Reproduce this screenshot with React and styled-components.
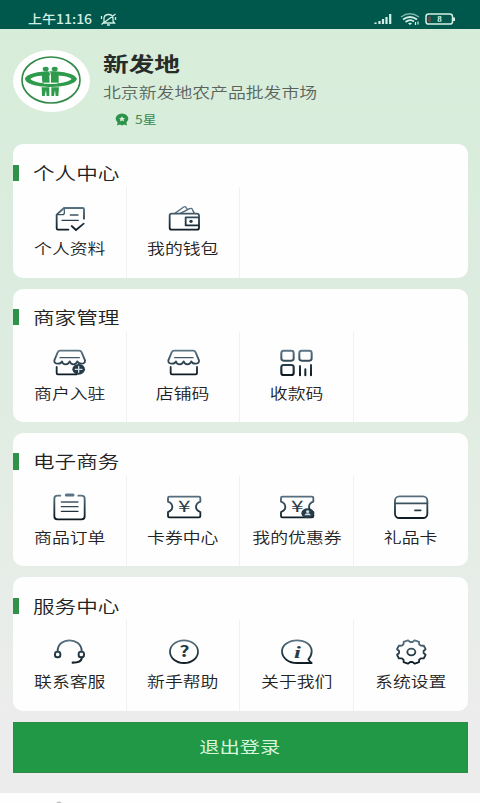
import styled, { createGlobalStyle } from "styled-components";

const GlobalStyle = createGlobalStyle`
    * {
        box-sizing: border-box;
    }

    body {
        margin: 0;
        background-color: #fefefe;
        font-family: "Noto Sans CJK SC", sans-serif;
        overflow: hidden;
    }
`;

const INK = "url(#ink)";
const DARK = "#253b47";

const Glyph = styled.text`
    fill: #273b47;
    stroke: none;
    font-family: ${({ $serif }) => ($serif ? '"Liberation Serif", serif' : '"Noto Sans CJK SC", sans-serif')};
    font-style: ${({ $serif }) => ($serif ? "italic" : "normal")};
    font-weight: ${({ $bold }) => ($bold ? "bold" : "400")};
    text-anchor: middle;
`;

// 톱니바퀴 외곽선
const gearPath = (cx, cy, rx, ry) => {
    const steps = [[-17, 0.84], [-9, 1], [9, 1], [17, 0.84]];
    const points = [];
    for (let i = 0; i < 8; i++) {
        steps.forEach(([offset, radius]) => {
            const angle = ((22.5 + i * 45 + offset) * Math.PI) / 180;
            points.push(`${(cx + rx * radius * Math.cos(angle)).toFixed(1)} ${(cy + ry * radius * Math.sin(angle)).toFixed(1)}`);
        });
    }
    return `M${points.join("L")}Z`;
};

const TICKET = "M16 17H105Q109 17 109 21V32Q96 37 96 48Q96 58 109 63V75Q109 79 105 79H16Q12 79 12 75V63Q25 58 25 48Q25 37 12 32V21Q12 17 16 17Z";
const AWNING = "M13 40L23 16Q25 11 31 11H87Q93 11 95 16L105 40Q106 50 94 50Q85 50 82 43Q79 52 70 52Q62 52 59 43Q56 52 47 52Q38 52 36 43Q33 50 24 50Q12 50 13 40Z";

const Yen = () => (
    <Glyph x="0" y="0" fontSize="45" transform="translate(61 64) scale(1.5 1)">¥</Glyph>
);

const icons = {
    profile: (
        <>
            <path d="M42 15H98Q102 15 102 19V47M42 15L20 35V76Q20 80 24 80H55" />
            <path d="M20 35H37Q43 35 43 30V15M36 52H85M61 36H84" strokeWidth="4" />
            <path d="M65 69L78 81L101 62" />
        </>
    ),
    wallet: (
        <>
            <rect x="17" y="32" width="88" height="48" rx="6" />
            <path d="M33 31L59 12Q63 9 66 13L70 19M49 31L77 17Q83 14 85 19L91 31" strokeWidth="4" />
            <path d="M104 43H65V67H104" />
            <circle cx="81" cy="55" r="5" fill={DARK} stroke="none" />
        </>
    ),
    join: (
        <>
            <path d={AWNING} />
            <path d="M30 32H88" strokeWidth="4" />
            <path d="M20 60V78Q20 82 24 82H80" />
            <ellipse cx="86" cy="67" rx="19" ry="16" fill={DARK} stroke="none" />
            <path d="M76 67H96M86 58V76" stroke="#cfdde5" strokeWidth="4" />
        </>
    ),
    shop: (
        <>
            <path d={AWNING} />
            <path d="M32 32H87" strokeWidth="4" />
            <path d="M20 60V78Q20 82 24 82H95Q99 82 99 78V60" />
        </>
    ),
    payCode: (
        <>
            <rect x="13" y="11" width="37" height="30" rx="7" strokeWidth="6" />
            <rect x="67" y="11" width="37" height="30" rx="7" strokeWidth="6" />
            <rect x="13" y="54" width="37" height="30" rx="7" strokeWidth="6.5" />
            <path d="M69 57V85M85 67V85M102 54V85" strokeWidth="6" />
        </>
    ),
    order: (
        <>
            <path d="M31 14H22Q13 14 13 23V76Q13 85 22 85H95Q104 85 104 76V23Q104 14 95 14H85" />
            <path d="M49 12H69" strokeWidth="9" />
            <path d="M34 33H84M34 47H84M34 61H84" strokeWidth="4" />
        </>
    ),
    ticket: (
        <>
            <path d={TICKET} />
            <Yen />
        </>
    ),
    coupon: (
        <>
            <path d={TICKET} />
            <Yen />
            <ellipse cx="92" cy="67" rx="19" ry="15" fill={DARK} stroke="none" />
            <ellipse cx="92" cy="62" rx="5" ry="4" fill="#cfdde5" stroke="none" />
            <path d="M82 73Q84 67 92 67Q100 67 102 73Z" fill="#cfdde5" stroke="none" />
        </>
    ),
    giftCard: (
        <>
            <rect x="12" y="16" width="97" height="65" rx="13" />
            <path d="M12 37H109M72 58H89" />
        </>
    ),
    service: (
        <>
            <path d="M23 46C22 2 95 2 95 46" />
            <rect x="15" y="47" width="16" height="17" rx="7" strokeWidth="6" />
            <rect x="86" y="47" width="16" height="17" rx="7" strokeWidth="6" />
            <path d="M95 65V68Q93 80 68 80" strokeWidth="6.5" />
        </>
    ),
    help: (
        <>
            <ellipse cx="60" cy="47" rx="42" ry="34" />
            <Glyph x="0" y="0" $bold fontSize="46" transform="translate(61 63) scale(1.3 1)">?</Glyph>
        </>
    ),
    about: (
        <>
            <path d="M60 81H104Q97 76 94 70Q104 60 104 46C104 26 84 13 60 13C35 13 15 28 15 46C15 66 35 81 60 81Z" />
            <Glyph x="0" y="0" $serif $bold fontSize="53" transform="translate(61 65) scale(1.4 1)">i</Glyph>
        </>
    ),
    settings: (
        <>
            <path d={gearPath(61, 48, 44, 36)} />
            <ellipse cx="61" cy="48" rx="12" ry="10" />
        </>
    ),
};

const sections = [
    { title: "个人中心", items: [["profile", "个人资料"], ["wallet", "我的钱包"]] },
    { title: "商家管理", items: [["join", "商户入驻"], ["shop", "店铺码"], ["payCode", "收款码"]] },
    { title: "电子商务", items: [["order", "商品订单"], ["ticket", "卡券中心"], ["coupon", "我的优惠券"], ["giftCard", "礼品卡"]] },
    { title: "服务中心", items: [["service", "联系客服"], ["help", "新手帮助"], ["about", "关于我们"], ["settings", "系统设置"]] },
];

function StatusIcons() {
    return (
        <svg width="84" height="16" viewBox="0 0 84 16" fill="none" stroke="#d3efe6">
            <path d="M2.5 13V11.5M6.5 13V10M10 13V8M13.5 13V6M17.2 13V3" strokeWidth="2.2" />
            <path d="M28 6Q37 -0.5 46 6" strokeWidth="1.4" opacity="0.6" />
            <path d="M30 8.5Q37 3.5 44 8.5M32.5 11Q37 7.5 41 10.5" strokeWidth="1.8" />
            <path d="M35 12.5L37 14L39 12.5L37 11.5Z" fill="#d3efe6" stroke="none" />
            <path d="M42.5 11V14M45 10.5V13.5" strokeWidth="1.2" />
            <rect x="53" y="3" width="26.5" height="10" rx="2.6" strokeWidth="1.5" />
            <path d="M81 6.5V10" strokeWidth="2" />
            <path d="M56.5 5.5V11" stroke="#6b4b43" strokeWidth="2.5" />
            <BatteryText x="66.5" y="11">8</BatteryText>
        </svg>
    );
}

function Logo() {
    return (
        <svg width="77" height="62" viewBox="2 12 231 186">
            <ellipse cx="116" cy="102" rx="87" ry="69" fill="none" stroke="#328a49" strokeWidth="5" />
            <path
                d="M38 99C40 84 80 76 115 76C152 76 190 84 194 99C190 115 152 123 115 123C80 123 40 115 38 99ZM54 99C62 108 90 113 115 113C142 113 170 108 178 99C170 91 142 88 115 88C90 88 62 91 54 99Z"
                fill="#2e9a4b"
                fillRule="evenodd"
            />
            <g fill="#2e9a4b">
                <ellipse cx="100" cy="69" rx="9" ry="7" />
                <ellipse cx="127" cy="69" rx="9" ry="7" />
                <path d="M88 78H111L112 110H90ZM116 78H139V110H116Z" />
                <path d="M88 124H111V150H103L101 132L97 150H89ZM117 124H140L138 150H130L128 132L125 150H117Z" />
            </g>
            <path d="M108 72L114 82V106M94 112H135" fill="none" stroke="#fff" strokeWidth="2.5" />
        </svg>
    );
}

function App() {
    return (
        <Page>
            <GlobalStyle />
            <GradientDefs>
                <linearGradient id="ink" gradientUnits="userSpaceOnUse" x1="0" y1="8" x2="0" y2="84">
                    <stop offset="0" stopColor="#60798a" />
                    <stop offset="0.5" stopColor="#2f4653" />
                    <stop offset="1" stopColor="#0d1a22" />
                </linearGradient>
            </GradientDefs>
            <StatusBar>
                <Clock>
                    <Time>上午11:16</Time>
                    <svg width="18" height="16" viewBox="0 0 18 16" fill="none" stroke="#d3efe6" strokeWidth="1.3">
                        <path d="M4 11V7Q4.5 3.5 8.5 3.5Q12.5 3.5 13 7V10L14.5 12H3L4 11M7 14H10M1.5 13.5L15.5 3M1.5 5V8M15.5 6V9" />
                    </svg>
                </Clock>
                <StatusIcons />
            </StatusBar>
            <Content>
                <Header>
                    <Avatar><Logo /></Avatar>
                    <div>
                        <Name>新发地</Name>
                        <Market>北京新发地农产品批发市场</Market>
                        <Rating>
                            <svg width="14" height="13" viewBox="0 0 14 13">
                                <path d="M3 8L2 12.5L5 11.5L7 12.5L9 11.5L12 12.5L11 8Z" fill="#2c9149" />
                                <ellipse cx="7" cy="5.6" rx="6.3" ry="5.2" fill="#2c9149" />
                                <path d="M7 3.2L8 5L10 5.3L8.5 6.6L9 8.5L7 7.5L5 8.5L5.5 6.6L4 5.3L6 5Z" fill="#d9ecdc" />
                            </svg>
                            <Stars>5星</Stars>
                        </Rating>
                    </div>
                </Header>
                <Sections>
                    {sections.map(({ title, items }) => (
                        <Card key={title}>
                            <CardTitle><Marker /><TitleText>{title}</TitleText></CardTitle>
                            <Menu>
                                {items.map(([icon, label], index) => (
                                    <MenuItem key={label} $last={index === 3}>
                                        <Icon viewBox="0 0 120 90">{icons[icon]}</Icon>
                                        <Label>{label}</Label>
                                    </MenuItem>
                                ))}
                            </Menu>
                        </Card>
                    ))}
                </Sections>
                <Logout><LogoutText>退出登录</LogoutText></Logout>
            </Content>
            <Footer>
                <svg width="6" height="2" viewBox="0 0 6 2"><path d="M0 2Q3 -1 6 2" fill="#bbb" /></svg>
            </Footer>
        </Page>
    );
}

export default App;

const Page = styled.div`
    width: 480px;
    height: 803px;
    display: flex;
    flex-direction: column;
    overflow: hidden;
`;

const GradientDefs = styled.svg`
    position: absolute;
    width: 0;
    height: 0;
`;

const StatusBar = styled.div`
    display: flex;
    justify-content: space-between;
    height: 29px;
    padding: 10.5px 23.5px 0 28px;
    background-color: #00574b;
`;

const Clock = styled.div`
    display: flex;
    gap: 7px;
`;

// 가로로 넓은 글자
const WideText = styled.span`
    display: inline-block;
    white-space: nowrap;
    transform: scaleX(1.24);
`;

const Time = styled(WideText)`
    width: 65px;
    font-size: 12.5px;
    font-weight: 500;
    line-height: 15px;
    color: #d3efe6;
    transform-origin: left;
    transform: scaleX(1.12);
`;

const BatteryText = styled.text`
    fill: #d3efe6;
    stroke: none;
    font-family: "Liberation Serif", serif;
    font-size: 9px;
    font-weight: bold;
    text-anchor: middle;
`;

const Content = styled.div`
    height: 764px;
    padding: 0 12.5px 0 13px;
    background: linear-gradient(to bottom, #d7edd9 0%, #dcecdf 35%, #e5ede6 65%, #ececec 92%);
`;

const Header = styled.div`
    display: flex;
    gap: 13px;
    height: 115.4px;
    padding-top: 21px;
`;

const Avatar = styled.div`
    width: 77px;
    height: 62px;
    border-radius: 50%;
    background-color: white;
    overflow: hidden;
`;

const Name = styled(WideText)`
    display: block;
    font-size: 20.7px;
    font-weight: 700;
    line-height: 27px;
    color: #282c29;
    transform-origin: left;
`;

const Market = styled(WideText)`
    display: block;
    margin-top: 1px;
    font-size: 14.4px;
    font-weight: 350;
    line-height: 28px;
    color: #5a645c;
    transform-origin: left;
`;

const Rating = styled.div`
    display: flex;
    align-items: center;
    gap: 6px;
    height: 26px;
    padding: 0 0 0 12px;
`;

const Stars = styled(WideText)`
    font-size: 11.3px;
    line-height: 24px;
    color: #38894f;
    transform-origin: left;
    transform: scaleX(1.22);
`;

const Sections = styled.div`
    display: flex;
    flex-direction: column;
    gap: 10.8px;
`;

const Card = styled.div`
    height: 133.5px;
    border-radius: 10px;
    background-color: #fefefe;
    overflow: hidden;
`;

const CardTitle = styled.div`
    display: flex;
    align-items: center;
    gap: 14px;
    height: 43px;
    padding-top: 14px;
`;

const Marker = styled.span`
    width: 5.5px;
    height: 16.5px;
    background-color: #309149;
`;

const TitleText = styled(WideText)`
    font-size: 17.4px;
    font-weight: 350;
    line-height: 26px;
    color: #222;
    transform-origin: left;
`;

const Menu = styled.div`
    display: grid;
    grid-template-columns: repeat(4, 1fr);
    height: 90.5px;
`;

const MenuItem = styled.div`
    display: flex;
    flex-direction: column;
    align-items: center;
    padding-top: 15.5px;
    border-right: ${({ $last }) => ($last ? "none" : "1px solid #f0f2f1")};
`;

const Icon = styled.svg`
    width: 40px;
    height: 30px;
    margin-left: 1.4px;
    fill: none;
    stroke: ${INK};
    stroke-width: 5.5;
    stroke-linecap: round;
    stroke-linejoin: round;
`;

const Label = styled(WideText)`
    margin-top: 3.6px;
    font-size: 14.4px;
    font-weight: 350;
    line-height: 24px;
    color: #222;
`;

const Logout = styled.button`
    display: block;
    width: 100%;
    height: 51px;
    margin-top: 11.2px;
    padding: 0 0 2px;
    border: 1px solid #2c8c48;
    background-color: #209845;
    cursor: pointer;
`;

const LogoutText = styled(WideText)`
    font-family: "Noto Sans CJK SC", sans-serif;
    font-size: 16.4px;
    line-height: 24px;
    color: #d7f5dc;
`;

const Footer = styled.div`
    display: flex;
    align-items: flex-end;
    height: 10px;
    padding-left: 56px;
    background-color: #fefefe;
`;
